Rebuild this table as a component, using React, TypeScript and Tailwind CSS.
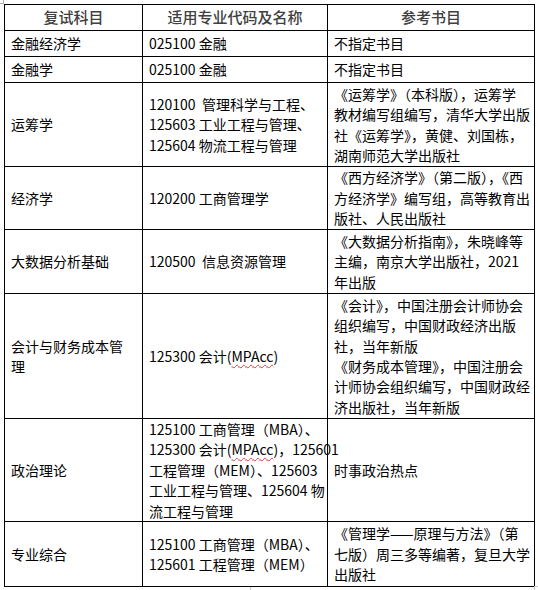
import React from "react";

type Row = { h: string; a: React.ReactNode; b: React.ReactNode; c: React.ReactNode };

const MP = () => (
  <span className="underline decoration-wavy decoration-[#d04040] decoration-1 underline-offset-2">MPAcc</span>
);

const L = ({ children }: { children: React.ReactNode }) => <div className="whitespace-nowrap">{children}</div>;

const rows: Row[] = [
  { h: "h-[26px]", a: "金融经济学", b: "025100 金融", c: "不指定书目" },
  { h: "h-[26px]", a: "金融学", b: "025100 金融", c: "不指定书目" },
  {
    h: "h-[84px]",
    a: "运筹学",
    b: (
      <>
        <L>120100&nbsp; 管理科学与工程、</L>
        <L>125603 工业工程与管理、</L>
        <L>125604 物流工程与管理</L>
      </>
    ),
    c: (
      <>
        <L>《运筹学》（本科版），运筹学</L>
        <L>教材编写组编写，清华大学出版</L>
        <L>社《运筹学》，黄健、刘国栋，</L>
        <L>湖南师范大学出版社</L>
      </>
    ),
  },
  {
    h: "h-[63px]",
    a: "经济学",
    b: "120200 工商管理学",
    c: (
      <>
        <L>《西方经济学》（第二版），《西</L>
        <L>方经济学》编写组，高等教育出</L>
        <L>版社、人民出版社</L>
      </>
    ),
  },
  {
    h: "h-[64px]",
    a: "大数据分析基础",
    b: <>120500&nbsp; 信息资源管理</>,
    c: (
      <>
        <L>《大数据分析指南》，朱晓峰等</L>
        <L>主编，南京大学出版社，2021</L>
        <L>年出版</L>
      </>
    ),
  },
  {
    h: "h-[125px]",
    a: (
      <>
        <L>会计与财务成本管</L>
        <L>理</L>
      </>
    ),
    b: (
      <>
        125300 会计(<MP />)
      </>
    ),
    c: (
      <>
        <L>《会计》，中国注册会计师协会</L>
        <L>组织编写，中国财政经济出版</L>
        <L>社，当年新版</L>
        <L>《财务成本管理》，中国注册会</L>
        <L>计师协会组织编写，中国财政经</L>
        <L>济出版社，当年新版</L>
      </>
    ),
  },
  {
    h: "h-[103px]",
    a: "政治理论",
    b: (
      <>
        <L>125100 工商管理（MBA）、</L>
        <L>
          125300 会计(<MP />)，125601
        </L>
        <L>工程管理（MEM）、125603</L>
        <L>工业工程与管理、125604 物</L>
        <L>流工程与管理</L>
      </>
    ),
    c: "时事政治热点",
  },
  {
    h: "h-[65px]",
    a: "专业综合",
    b: (
      <>
        <L>125100 工商管理（MBA）、</L>
        <L>125601 工程管理（MEM）</L>
      </>
    ),
    c: (
      <>
        <L>《管理学——原理与方法》（第</L>
        <L>七版）周三多等编著，复旦大学</L>
        <L>出版社</L>
      </>
    ),
  },
];

export default function App() {
  return (
    <div className="relative w-[538px] h-[590px] overflow-hidden bg-white font-['Noto_Sans_CJK_SC',sans-serif] text-black">
      <div className="absolute left-0 top-0 w-[4px] h-[4px] border-r border-b border-[#b0b0b0]" />
      <div className="absolute left-[534px] top-[586px] w-[4px] h-[4px] border-l border-t border-[#c8c8c8]" />
      <div className="absolute left-[250px] top-[587px] w-[1px] h-[3px] bg-[#c8c8c8]" />
      <div className="pl-[4px] pt-[4px]">
        <table className="table-fixed border-collapse w-[530px] text-[14px] leading-[20.4px]">
          <colgroup>
            <col className="w-[138px]" />
            <col className="w-[185px]" />
            <col className="w-[207px]" />
          </colgroup>
          <thead>
            <tr className="h-[26px]">
              <th className="border border-black text-center font-medium text-[15px] text-[#404040] p-0 align-middle">复试科目</th>
              <th className="border border-black text-center font-medium text-[15px] text-[#404040] p-0 align-middle">适用专业代码及名称</th>
              <th className="border border-black text-center font-medium text-[15px] text-[#404040] p-0 align-middle">参考书目</th>
            </tr>
          </thead>
          <tbody>
            {rows.map((r, i) => (
              <tr key={i} className={r.h}>
                <td className="border border-black align-middle pl-[6px] pr-0 py-0">{r.a}</td>
                <td className="border border-black align-middle pl-[6px] pr-0 py-0">{r.b}</td>
                <td className="border border-black align-middle pl-[6px] pr-0 py-0">{r.c}</td>
              </tr>
            ))}
          </tbody>
        </table>
      </div>
    </div>
  );
}
